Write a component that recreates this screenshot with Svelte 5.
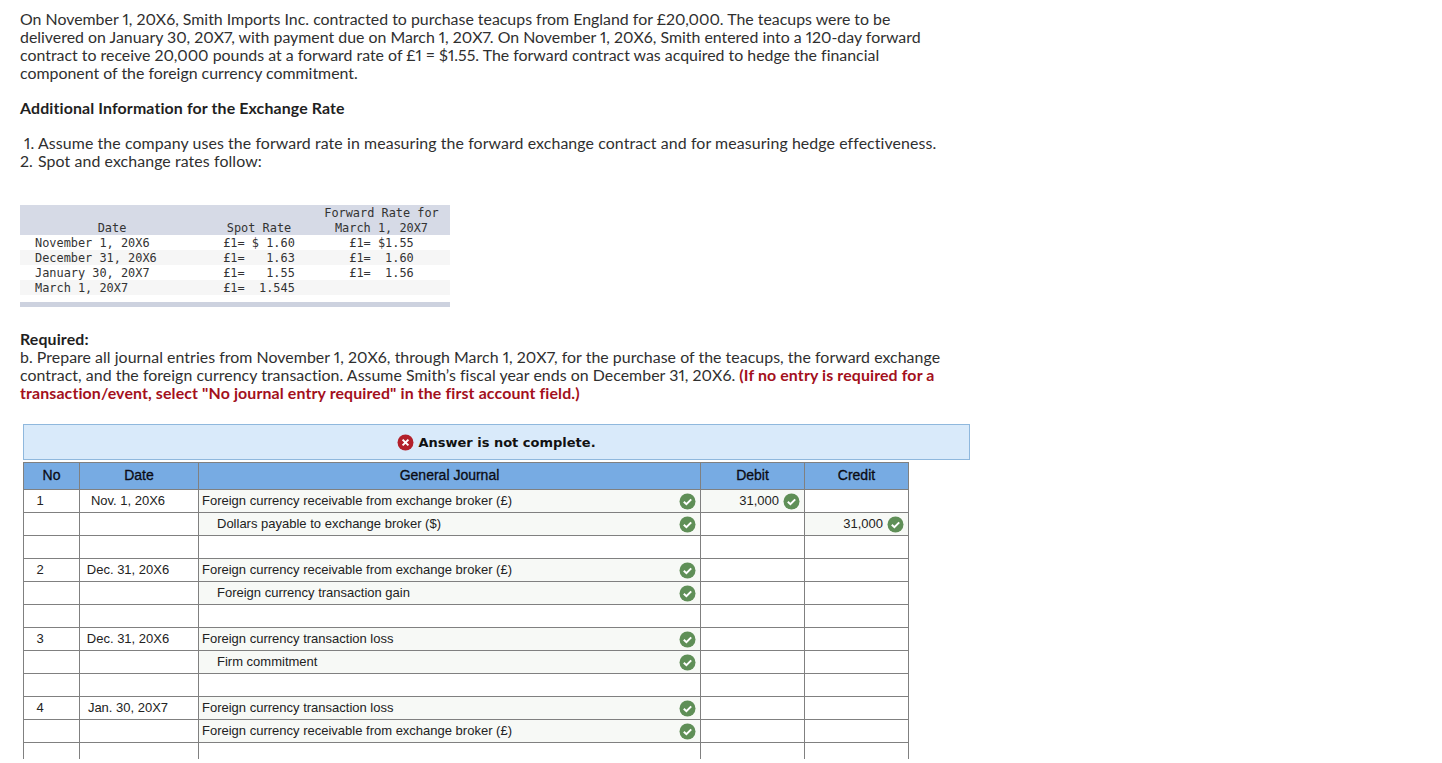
<script>
  const rates = [
    { date: "November 1, 20X6", spot: "£1= $ 1.60", fwd: "£1= $1.55" },
    { date: "December 31, 20X6", spot: "£1=   1.63", fwd: "£1=  1.60" },
    { date: "January 30, 20X7", spot: "£1=   1.55", fwd: "£1=  1.56" },
    { date: "March 1, 20X7", spot: "£1=  1.545", fwd: "" },
  ];

  const rows = [
    { no: "1", date: "Nov. 1, 20X6", acct: "Foreign currency receivable from exchange broker (£)", debit: "31,000" },
    { acct: "Dollars payable to exchange broker ($)", indent: true, credit: "31,000" },
    {},
    { no: "2", date: "Dec. 31, 20X6", acct: "Foreign currency receivable from exchange broker (£)" },
    { acct: "Foreign currency transaction gain", indent: true },
    {},
    { no: "3", date: "Dec. 31, 20X6", acct: "Foreign currency transaction loss" },
    { acct: "Firm commitment", indent: true },
    {},
    { no: "4", date: "Jan. 30, 20X7", acct: "Foreign currency transaction loss" },
    { acct: "Foreign currency receivable from exchange broker (£)" },
    {},
  ];
</script>

{#snippet check()}
  <svg class="check" width="17" height="17" viewBox="0 0 17 17">
    <circle cx="8.5" cy="8.5" r="8" fill="#5f8f57" />
    <path d="M4.8 8.8l2.6 2.4 4.8-4.8" fill="none" stroke="#fff" stroke-width="2" />
  </svg>
{/snippet}

<div class="page">
  <p class="para">
    On November 1, 20X6, Smith Imports Inc. contracted to purchase teacups from England for £20,000. The teacups were to be<br />
    delivered on January 30, 20X7, with payment due on March 1, 20X7. On November 1, 20X6, Smith entered into a 120-day forward<br />
    contract to receive 20,000 pounds at a forward rate of £1 = $1.55. The forward contract was acquired to hedge the financial<br />
    component of the foreign currency commitment.
  </p>
  <p class="para heading"><strong>Additional Information for the Exchange Rate</strong></p>
  <ol>
    <li><span class="num first">1.</span>Assume the company uses the forward rate in measuring the forward exchange contract and for measuring hedge effectiveness.</li>
    <li><span class="num">2.</span>Spot and exchange rates follow:</li>
  </ol>

  <table class="rates">
    <thead>
      <tr>
        <th class="r-date"><div>Date</div></th>
        <th class="r-spot"><div>Spot Rate</div></th>
        <th class="r-fwd"><div>Forward Rate for<br />March 1, 20X7</div></th>
      </tr>
    </thead>
    <tbody>
      {#each rates as r}
        <tr>
          <td class="r-date">{r.date}</td>
          <td class="r-spot">{r.spot}</td>
          <td class="r-fwd">{r.fwd}</td>
        </tr>
      {/each}
    </tbody>
  </table>
  <div class="rates-foot"></div>

  <p class="para required">
    <strong>Required:</strong><br />
    b. Prepare all journal entries from November 1, 20X6, through March 1, 20X7, for the purchase of the teacups, the forward exchange<br />
    contract, and the foreign currency transaction. Assume Smith’s fiscal year ends on December 31, 20X6.
    <strong class="red">(If no entry is required for a<br />transaction/event, select "No journal entry required" in the first account field.)</strong>
  </p>

  <div class="banner">
    <svg width="17" height="17" viewBox="0 0 17 17">
      <circle cx="8.5" cy="8.5" r="8" fill="#b3202a" />
      <path d="M5.6 5.6l5.8 5.8M11.4 5.6l-5.8 5.8" stroke="#fff" stroke-width="2" />
    </svg>
    <span>Answer is not complete.</span>
  </div>

  <table class="journal">
    <thead>
      <tr>
        <th class="c-no">No</th>
        <th class="c-date">Date</th>
        <th class="c-acct">General Journal</th>
        <th class="c-amt">Debit</th>
        <th class="c-amt">Credit</th>
      </tr>
    </thead>
    <tbody>
      {#each rows as row}
        <tr>
          <td class="no">{row.no ?? ""}</td>
          <td class="date">{row.date ?? ""}</td>
          <td class="acct" class:filled={row.acct}>
            {#if row.acct}
              <div class="cell-in">
                <span class:indent={row.indent}>{row.acct}</span>
                {@render check()}
              </div>
            {/if}
          </td>
          <td class="amt" class:filled={row.debit}>
            {#if row.debit}
              <div class="cell-in end"><span>{row.debit}</span>{@render check()}</div>
            {/if}
          </td>
          <td class="amt" class:filled={row.credit}>
            {#if row.credit}
              <div class="cell-in end"><span>{row.credit}</span>{@render check()}</div>
            {/if}
          </td>
        </tr>
      {/each}
    </tbody>
  </table>
</div>

<style>
  :global(html), :global(body) {
    margin: 0;
    background: #fff;
  }
  .page {
    height: 759px;
    overflow: hidden;
    padding: 10px 0 0 20px;
    box-sizing: border-box;
    font-family: Lato, "Liberation Sans", sans-serif;
    font-size: 15.9px;
    font-variant-numeric: proportional-nums;
    font-variant-ligatures: none;
    line-height: 18px;
    color: #2f2f2f;
  }
  .para {
    margin: 0;
  }
  .heading {
    margin-top: 17px;
  }
  strong {
    font-weight: 700;
    letter-spacing: 0.13px;
    color: #1f1f1f;
  }
  ol {
    list-style: none;
    margin: 17px 0 0;
    padding: 0;
    letter-spacing: 0.09px;
  }
  .num {
    display: inline-block;
    width: 18px;
  }
  .num.first {
    padding-left: 4px;
    width: 14px;
  }
  .rates {
    margin-top: 35px;
    width: 430px;
    table-layout: fixed;
    border-collapse: collapse;
    font-family: "DejaVu Sans Mono", monospace;
    font-size: 11.9px;
    line-height: 15px;
    letter-spacing: 0;
    color: #333;
  }
  .rates th {
    background: #d6dae6;
    font-weight: 400;
    padding: 1px 0 0;
    vertical-align: bottom;
  }
  .rates th div {
    margin-bottom: -1px;
  }
  .rates td {
    padding: 2px 0 0;
    height: 13px;
    line-height: 13px;
    white-space: pre;
  }
  .rates tbody tr:nth-child(even) td {
    background: #f6f6f6;
  }
  .rates th.r-date {
    width: 184px;
    padding-right: 10px;
  }
  .rates td.r-date {
    padding-left: 15px;
  }
  .r-spot {
    width: 90px;
    text-align: center;
  }
  .rates .r-fwd {
    text-align: center;
    padding-left: 9px;
  }
  .rates-foot {
    width: 430px;
    height: 5px;
    margin-top: 7px;
    background: #cdd2df;
  }
  .required {
    margin-top: 23px;
    letter-spacing: 0.04px;
  }
  .red {
    color: #a3101c;
  }
  .banner {
    margin: 22px 0 0 3px;
    width: 947px;
    height: 36px;
    box-sizing: border-box;
    border: 1px solid #8fb8dd;
    background: #d9eafa;
    display: flex;
    align-items: center;
    justify-content: center;
    gap: 4px;
    font-family: "DejaVu Sans", sans-serif;
    font-weight: 700;
    font-size: 13px;
    color: #111;
  }
  .banner span {
    padding-top: 2px;
  }
  .journal {
    margin: 2px 0 0 3px;
    width: 886px;
    table-layout: fixed;
    border-collapse: collapse;
    font-family: "Liberation Sans", sans-serif;
    font-size: 13px;
    color: #222;
  }
  .journal th,
  .journal td {
    border: 1px solid #808080;
    padding: 0;
    height: 22px;
    box-sizing: content-box;
  }
  .journal th {
    height: 24px;
    padding-bottom: 2px;
    background: #77abe3;
    font-size: 14px;
    font-weight: 400;
    color: #0b0b14;
    -webkit-text-stroke: 0.3px #0b0b14;
  }
  .c-no {
    width: 55px;
  }
  .c-date {
    width: 118px;
  }
  .c-acct {
    width: 501px;
  }
  .c-amt {
    width: 103px;
  }
  .no {
    text-align: center;
    padding-right: 23px !important;
    width: 32px;
  }
  .date {
    text-align: center;
    padding-right: 22px !important;
  }
  .filled {
    background: #f7f9f6;
  }
  .cell-in {
    display: flex;
    align-items: center;
    justify-content: space-between;
    padding: 0 4px 0 3px;
    height: 22px;
  }
  .cell-in.end {
    justify-content: flex-end;
    gap: 4px;
  }
  .indent {
    padding-left: 15px;
  }
  .check {
    flex: none;
  }
</style>
